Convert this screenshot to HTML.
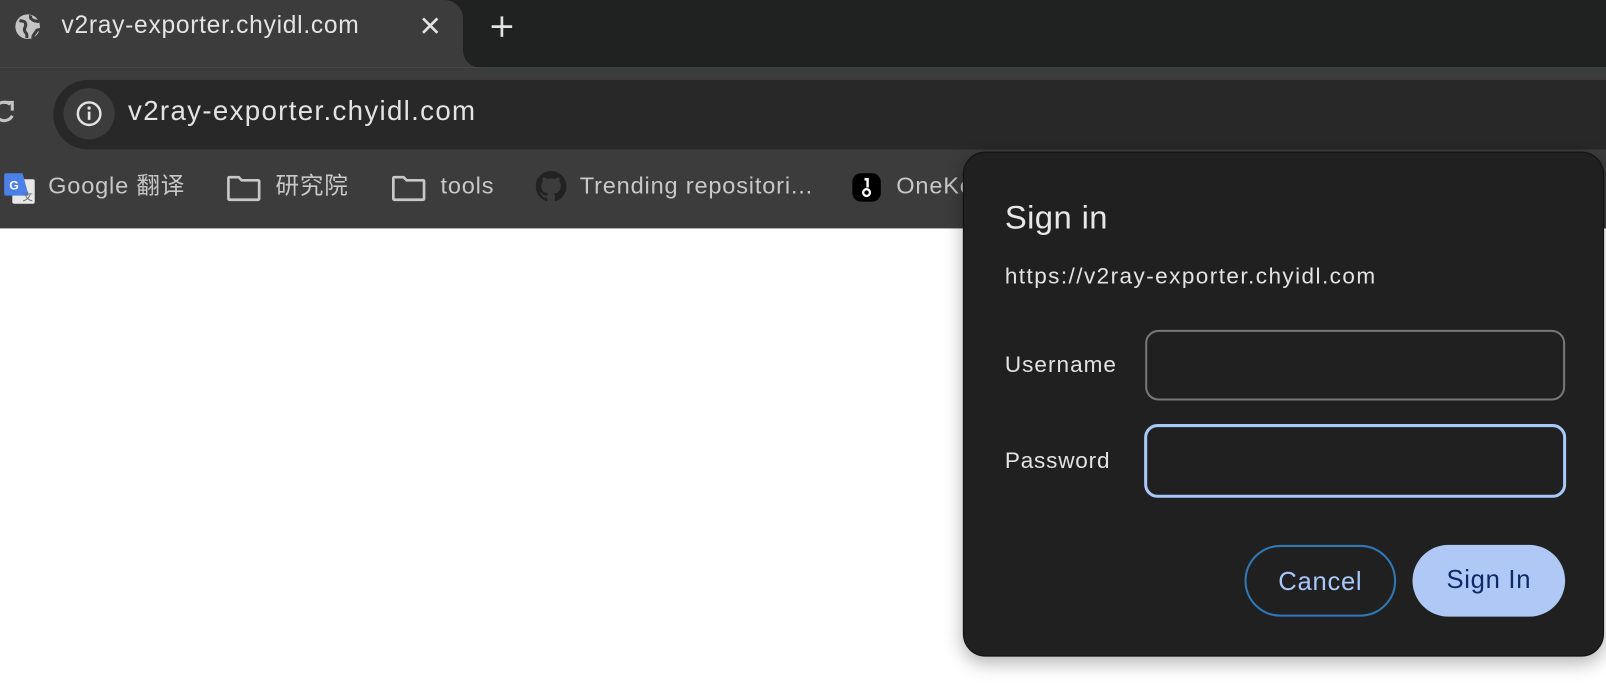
<!DOCTYPE html>
<html><head><meta charset="utf-8"><style>
*{margin:0;padding:0;box-sizing:border-box}
body{width:1606px;height:696px;overflow:hidden;background:#fff;font-family:"Liberation Sans","Noto Sans CJK SC",sans-serif;position:relative}
#w{position:absolute;left:0;top:0;width:1568px;height:680px;transform:scale(1.0243);transform-origin:0 0}
.strip{position:absolute;left:0;top:0;width:1606px;height:66px;background:#202121}
.tab{position:absolute;left:0;top:0;width:452px;height:66px;background:#3c3c3c;border-radius:0 18px 0 0}
.tab::after{content:"";position:absolute;right:-16px;bottom:0;width:16px;height:16px;background:radial-gradient(circle at 100% 0,transparent 15.5px,#3c3c3c 16px)}
.toolbar{position:absolute;left:0;top:66px;width:1606px;height:157px;background:#3c3c3c}
.omni{position:absolute;left:52px;top:78px;width:1560px;height:68px;background:#282828;border-radius:34px 0 0 34px}
.info{position:absolute;left:62px;top:86px;width:50px;height:50px;border-radius:25px;background:#3c3c3c}
.t{position:absolute;color:#e3e3e3;white-space:nowrap}
.bm{font-size:23px;color:#c8c8c8;letter-spacing:.8px;top:167px;line-height:28px}
.dlg{position:absolute;left:940px;top:148px;width:626px;height:493px;background:#202020;border:1px solid #111;border-radius:22px;box-shadow:0 6px 18px rgba(0,0,0,.3)}
.inp{position:absolute;left:177px;width:410px;height:69px;border-radius:13px}
.btn{position:absolute;top:383px;height:70px;border-radius:36px;font-size:25px;text-align:center;line-height:68px;letter-spacing:.7px}
.lab{font-size:22px;letter-spacing:1px}
</style></head><body><div id="w">
<div class="strip"></div>
<div class="tab"></div>
<svg style="position:absolute;left:14px;top:13px" width="26" height="26" viewBox="0 0 26 26"><circle cx="13" cy="13" r="12" fill="#c4c4c4"/><path d="M5 7c3 1 5 0 6 3s-2 4-1 7 3 2 2 7M16 2c-1 3 1 4 3 5s4 0 5 2M18 24c0-3 2-4 3-6s2-2 4-2" stroke="#3c3c3c" stroke-width="3" fill="none"/></svg>
<div class="t" style="left:60px;top:11px;font-size:24px;letter-spacing:.7px">v2ray-exporter.chyidl.com</div>
<svg style="position:absolute;left:410px;top:15px" width="20" height="20" viewBox="0 0 20 20"><path d="M3 3L17 17M17 3L3 17" stroke="#e3e3e3" stroke-width="2.6"/></svg>
<svg style="position:absolute;left:478px;top:14px" width="24" height="24" viewBox="0 0 24 24"><path d="M12 2V22M2 12H22" stroke="#e3e3e3" stroke-width="2.6"/></svg>
<div class="toolbar"></div>
<div class="omni"></div>
<svg style="position:absolute;left:-10px;top:96px" width="26" height="28" viewBox="0 0 26 28"><path d="M20 6A9 9 0 1 0 22 17" stroke="#c4c4c4" stroke-width="3" fill="none"/><path d="M14 4H22V12" stroke="#c4c4c4" stroke-width="3" fill="none"/></svg>
<div class="info"></div>
<svg style="position:absolute;left:74px;top:98px" width="26" height="26" viewBox="0 0 26 26"><circle cx="13" cy="13" r="11" stroke="#e3e3e3" stroke-width="2.4" fill="none"/><path d="M13 11V19" stroke="#e3e3e3" stroke-width="2.6"/><circle cx="13" cy="7.5" r="1.6" fill="#e3e3e3"/></svg>
<div class="t" style="left:125px;top:93px;font-size:27px;letter-spacing:1.3px">v2ray-exporter.chyidl.com</div>
<svg style="position:absolute;left:4px;top:169px" width="30" height="30" viewBox="0 0 30 30"><rect x="8" y="6" width="22" height="24" rx="2" fill="#e8e8e8"/><path d="M0 2a2 2 0 0 1 2-2h16l6 22H2a2 2 0 0 1-2-2z" fill="#4a80e8"/><text x="5" y="16" font-size="12" fill="#fff" font-family="Liberation Sans" font-weight="bold">G</text><text x="18" y="27" font-size="10" fill="#666" font-family="Noto Sans CJK SC">文</text></svg>
<div class="t bm" style="left:47px">Google 翻译</div>
<svg style="position:absolute;left:221px;top:171px" width="34" height="26" viewBox="0 0 34 26"><path d="M2 3a1 1 0 0 1 1-1h9l3 3h16a1 1 0 0 1 1 1v17a1 1 0 0 1-1 1H3a1 1 0 0 1-1-1z" stroke="#c8c8c8" stroke-width="2.6" fill="none"/></svg>
<div class="t bm" style="left:269px">研究院</div>
<svg style="position:absolute;left:382px;top:171px" width="34" height="26" viewBox="0 0 34 26"><path d="M2 3a1 1 0 0 1 1-1h9l3 3h16a1 1 0 0 1 1 1v17a1 1 0 0 1-1 1H3a1 1 0 0 1-1-1z" stroke="#c8c8c8" stroke-width="2.6" fill="none"/></svg>
<div class="t bm" style="left:430px">tools</div>
<svg style="position:absolute;left:523px;top:167px" width="30" height="30" viewBox="0 0 16 16"><path fill="#222" d="M8 0C3.58 0 0 3.58 0 8c0 3.54 2.29 6.53 5.47 7.59.4.07.55-.17.55-.38v-1.33c-2.23.48-2.7-1.07-2.7-1.07-.36-.93-.89-1.17-.89-1.17-.73-.5.05-.49.05-.49.8.06 1.23.83 1.23.83.72 1.22 1.87.87 2.33.67.07-.52.28-.87.5-1.07-1.78-.2-3.64-.89-3.64-3.95 0-.87.31-1.59.82-2.15-.08-.2-.36-1.02.08-2.12 0 0 .67-.21 2.2.82a7.6 7.6 0 0 1 4 0c1.53-1.04 2.2-.82 2.2-.82.44 1.1.16 1.92.08 2.12.51.56.82 1.27.82 2.15 0 3.07-1.87 3.75-3.65 3.95.29.25.54.73.54 1.48v2.2c0 .21.15.46.55.38A8.01 8.01 0 0 0 16 8c0-4.42-3.58-8-8-8z"/></svg>
<div class="t bm" style="left:566px">Trending repositori...</div>
<svg style="position:absolute;left:832px;top:169px" width="28" height="28" viewBox="0 0 28 28"><rect width="28" height="28" rx="9" fill="#000"/><path d="M12 6h3v8" stroke="#fff" stroke-width="2.4" fill="none"/><circle cx="14" cy="19" r="3.3" stroke="#fff" stroke-width="2.2" fill="none"/></svg>
<div class="t bm" style="left:875px">OneKey</div>
<div class="dlg">
<div class="t" style="left:40px;top:45px;font-size:32px;color:#e8e8e8;letter-spacing:.4px">Sign in</div>
<div class="t lab" style="left:40px;top:108px;letter-spacing:1.4px">https://v2ray-exporter.chyidl.com</div>
<div class="t lab" style="left:40px;top:194px">Username</div>
<div class="inp" style="top:173px;border:2px solid #777"></div>
<div class="t lab" style="left:40px;top:288px;letter-spacing:.8px">Password</div>
<div class="inp" style="top:265px;left:176px;width:412px;height:72px;border:3px solid #a8c7fa"></div>
<div class="btn" style="left:274px;width:148px;border:2px solid #2f78b5;color:#a8c7fa">Cancel</div>
<div class="btn" style="left:438px;width:149px;background:#afc8f5;color:#0b2a6a">Sign In</div>
</div>
</div></body></html>
